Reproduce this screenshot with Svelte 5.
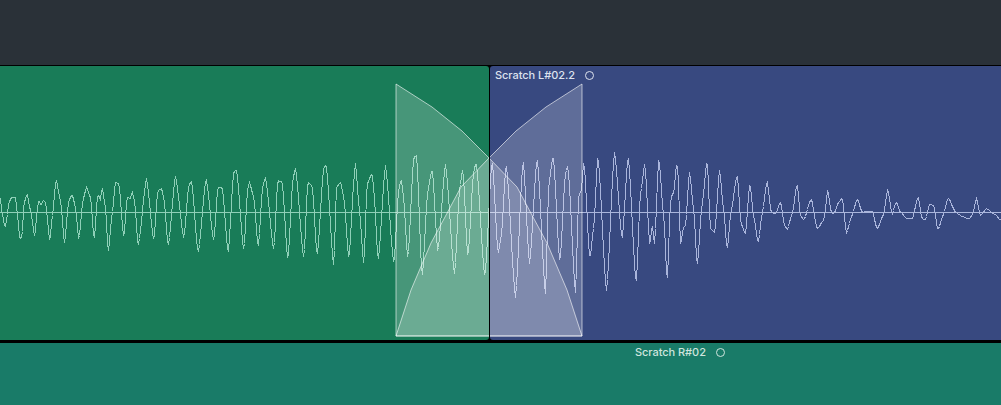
<script>
  // peak/trough envelope read off the reference, [x, y] in zoomed crop coordinates
  const zoomA = [[0,145],[5,190],[14,232],[20,198],[25,155],[35,140],[45,140],[50,185],[58,265],[65,258],[70,160],[80,130],[90,180],[103,258],[110,180],[115,148],[122,165],[128,148],[135,155],[148,272],[155,200],[167,88],[180,150],[192,277],[205,150],[215,132],[225,170],[235,268],[248,145],[258,112],[270,140],[281,268],[292,130],[300,148],[305,110],[315,170],[323,307],[335,190],[345,95],[355,100],[370,262],[380,140],[390,145],[395,125],[402,150],[413,287],[438,85],[460,270],[472,120],[483,115],[490,140],[503,287],[525,78],[550,262],[565,105],[573,92],[593,307],[617,85],[640,272],[652,112],[665,110],[683,307],[700,62],[708,60],[730,300],[742,110],[747,97],[760,140],[773,292],[787,105],[795,82],[820,300],[832,90],[845,95],[862,328],[878,80],[885,55],[910,325],[922,95],[935,105],[950,315],[970,50],[977,45],[1000,348]];
  const zoomB = [[18,110],[30,95],[40,140],[55,325],[72,70],[75,40],[85,160],[100,342],[110,100],[125,68],[130,120],[143,330],[165,45],[190,340],[205,115],[212,85],[218,130],[232,325],[250,20],[258,15],[275,380],[292,120],[305,55],[322,305],[345,42],[372,370],[388,110],[397,55],[412,320],[430,60],[437,35],[463,378],[485,30],[503,308],[512,260],[527,40],[555,440],[578,28],[597,340],[620,22],[645,430],[655,100],[668,15],[688,335],[705,70],[712,45],[735,425],[745,130],[752,125],[760,30],[778,325],[790,228],[802,15],[828,420],[852,5],[875,265],[893,15],[917,400],[930,130],[943,38],[958,285],[965,222],[972,280],[985,22]];
  const zoomC = [[10,200],[20,395],[30,160],[35,130],[40,130],[47,45],[52,50],[60,280],[70,228],[75,225],[87,65],[100,180],[110,345],[125,160],[140,28],[150,235],[163,245],[177,60],[190,180],[200,298],[212,180],[230,72],[242,220],[255,250],[268,97],[280,200],[293,277],[305,190],[320,92],[332,185],[345,190],[360,155],[372,225],[380,238],[395,190],[410,100],[420,195],[430,208],[452,145],[470,235],[490,208],[502,120],[512,185],[520,190],[535,155],[545,142],[558,245],[575,195],[590,145],[605,185],[620,183],[635,182],[650,235],[668,195],[682,118],[695,190],[707,155],[720,185],[740,205],[755,205],[773,138],[785,205],[795,207],[808,160],[820,165],[832,238],[848,195],[863,142],[885,185],[905,198],[925,205],[935,195],[948,145],[960,195],[978,175],[1000,190],[1023,210]];

  const peaks = [
    ...zoomA.map(([x, y]) => [x / 3, y / 3 + 150]),
    ...zoomB.map(([x, y]) => [x / 3 + 330, y / 3 + 150]),
    ...zoomC.map(([x, y]) => [x / 3 + 660, y / 3 + 150])
  ];

  function wavePoints() {
    const pts = [];
    for (let i = 0; i < peaks.length - 1; i++) {
      const [x0, y0] = peaks[i];
      const [x1, y1] = peaks[i + 1];
      for (let x = Math.ceil(x0); x < x1; x++) {
        const u = (x - x0) / (x1 - x0);
        const eased = 0.5 * u + (0.5 * (1 - Math.cos(Math.PI * u))) / 2;
        pts.push(`${x + 0.5},${Math.round(y0 + (y1 - y0) * eased) + 0.5}`);
      }
    }
    return pts.join(' ');
  }
  const wave = wavePoints();

  const fadeOut = [[396,84],[432,107],[462,131],[489,158],[517,187],[533,217],[547,243],[567,290],[582,336]];
  const fadeIn = fadeOut.map(([x, y]) => [978 - x, y]).reverse();
  const toPoints = (list) => list.map((p) => p.join(',')).join(' ');
  const outShape = toPoints([...fadeOut, [396, 336]]);
  const inShape = toPoints([...fadeIn, [582, 336]]);
</script>

{#snippet body()}
  <line class="zero" x1="0" y1="212.5" x2="1001" y2="212.5" />
  <polyline class="trace" points={wave} />
  <polygon class="fade" points={outShape} />
  <polygon class="fade" points={inShape} />
{/snippet}

<div class="arrange">
  <div class="toolbar"></div>
  <div class="lane">
    <div class="region left">
      <svg class="wave" width="1001" height="274" viewBox="0 66 1001 274">
        {@render body()}
      </svg>
    </div>
    <div class="region right">
      <div class="label">Scratch L#02.2<span class="ring"></span></div>
      <svg class="wave shifted" width="1001" height="274" viewBox="0 66 1001 274">
        {@render body()}
      </svg>
    </div>
  </div>
  <div class="lower">
    <div class="label">Scratch R#02<span class="ring"></span></div>
  </div>
</div>

<style>
  :global(body) {
    margin: 0;
    background: #000;
  }

  .arrange {
    width: 1001px;
    height: 405px;
    display: flex;
    flex-direction: column;
    overflow: hidden;
    font-family: Inter, "Liberation Sans", sans-serif;
  }

  .toolbar {
    height: 65px;
    background: #2a3138;
  }

  .lane {
    height: 274px;
    margin-top: 1px;
    display: flex;
    gap: 1px;
  }

  .region {
    position: relative;
    overflow: hidden;
  }

  .left {
    width: 489px;
    background: #197c58;
    border-radius: 0 3px 3px 0;
  }

  .right {
    flex: 1;
    background: #384980;
    border-radius: 3px 0 0 3px;
  }

  .wave {
    position: absolute;
    left: 0;
    top: 0;
    fill: none;
  }

  .wave.shifted {
    left: -490px;
  }

  .trace {
    shape-rendering: crispEdges;
  }

  .left .trace,
  .left .zero {
    stroke: #8fd0b8;
  }

  .right .trace,
  .right .zero {
    stroke: #aab5dc;
  }

  .fade {
    fill: rgba(255, 255, 255, 0.2);
    stroke: rgba(255, 255, 255, 0.6);
    stroke-width: 1;
  }

  .label {
    position: relative;
    z-index: 1;
    display: flex;
    align-items: center;
    font-size: 11px;
    font-weight: 500;
    letter-spacing: -0.05px;
    line-height: 18px;
    white-space: pre;
    gap: 10px;
    color: #dde2ee;
  }

  .right .label {
    padding-left: 5px;
  }

  .ring {
    width: 7px;
    height: 7px;
    border: 1px solid currentColor;
    border-radius: 50%;
  }

  .lower {
    flex: 1;
    margin-top: 3px;
    background: #197b68;
  }

  .lower .label {
    padding-left: 635px;
    color: #cfe5de;
  }
</style>
